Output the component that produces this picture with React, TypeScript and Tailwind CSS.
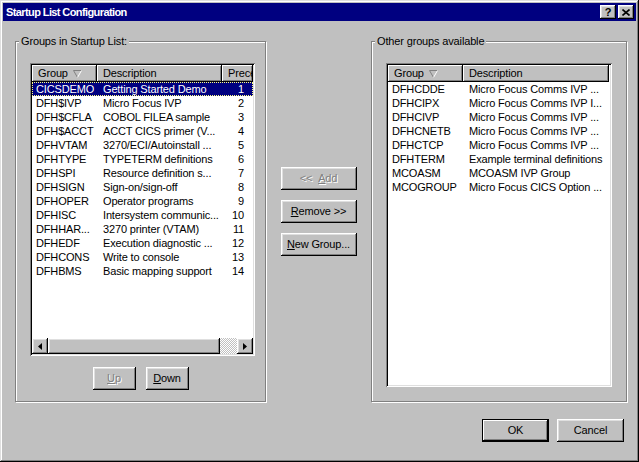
import React from "react";

const raised =
  "shadow-[inset_-1px_-1px_#000,inset_1px_1px_#fff,inset_-2px_-2px_#808080,inset_2px_2px_#dfdfdf]";
const raisedThin = "shadow-[inset_-1px_-1px_#000,inset_1px_1px_#fff,inset_-2px_-2px_#808080]";

const startup = [
  ["CICSDEMO", "Getting Started Demo", "1"],
  ["DFH$IVP", "Micro Focus IVP", "2"],
  ["DFH$CFLA", "COBOL FILEA sample", "3"],
  ["DFH$ACCT", "ACCT CICS primer (V...", "4"],
  ["DFHVTAM", "3270/ECI/Autoinstall ...", "5"],
  ["DFHTYPE", "TYPETERM definitions", "6"],
  ["DFHSPI", "Resource definition s...", "7"],
  ["DFHSIGN", "Sign-on/sign-off", "8"],
  ["DFHOPER", "Operator programs", "9"],
  ["DFHISC", "Intersystem communic...", "10"],
  ["DFHHAR...", "3270 printer (VTAM)", "11"],
  ["DFHEDF", "Execution diagnostic ...", "12"],
  ["DFHCONS", "Write to console", "13"],
  ["DFHBMS", "Basic mapping support", "14"],
];

const others = [
  ["DFHCDDE", "Micro Focus Comms IVP ..."],
  ["DFHCIPX", "Micro Focus Comms IVP I..."],
  ["DFHCIVP", "Micro Focus Comms IVP ..."],
  ["DFHCNETB", "Micro Focus Comms IVP ..."],
  ["DFHCTCP", "Micro Focus Comms IVP ..."],
  ["DFHTERM", "Example terminal definitions"],
  ["MCOASM", "MCOASM IVP Group"],
  ["MCOGROUP", "Micro Focus CICS Option ..."],
];

function SortArrow() {
  return (
    <svg width="9" height="8" viewBox="0 0 9 8" className="ml-[5px] mt-[1px]">
      <path d="M0.5 0.5 H8.5" stroke="#808080" />
      <path d="M0.5 0.5 L4.5 7.5" stroke="#808080" />
      <path d="M8.5 0.5 L4.5 7.5" stroke="#fff" />
    </svg>
  );
}

function HeaderCell({ w, label, sort, grow }: { w?: string; label: string; sort?: boolean; grow?: boolean }) {
  return (
    <div
      className={`${w ?? ""} ${grow ? "flex-1" : "shrink-0"} h-full flex items-center pl-[6px] overflow-hidden whitespace-nowrap bg-[#c0c0c0] ${raisedThin}`}
    >
      <span>{label}</span>
      {sort && <SortArrow />}
    </div>
  );
}

function Button({
  children,
  w,
  disabled,
  def,
}: {
  children: React.ReactNode;
  w: string;
  disabled?: boolean;
  def?: boolean;
}) {
  return (
    <div
      className={`${w} h-[23px] flex items-center justify-center bg-[#c0c0c0] ${
        def ? "border border-black shadow-[inset_-1px_-1px_#000,inset_1px_1px_#fff,inset_-2px_-2px_#808080]" : raised
      } ${disabled ? "text-[#808080] [text-shadow:1px_1px_#fff]" : "text-black"}`}
    >
      {children}
    </div>
  );
}

function GroupBox({ label, w, children }: { label: string; w: string; children: React.ReactNode }) {
  return (
    <div
      className={`${w} h-[361px] relative border border-[#808080] shadow-[inset_1px_1px_#fff,1px_1px_#fff] shrink-0`}
    >
      <div className="absolute -top-[7px] left-[3px] px-[2px] bg-[#c0c0c0] leading-[13px]">{label}</div>
      {children}
    </div>
  );
}

function ScrollArrow({ dir }: { dir: "left" | "right" }) {
  return (
    <div className={`w-[16px] h-[16px] shrink-0 flex items-center justify-center bg-[#c0c0c0] ${raised}`}>
      <svg width="4" height="7" viewBox="0 0 4 7">
        {dir === "left" ? <path d="M4 0 L0 3.5 L4 7 Z" fill="#000" /> : <path d="M0 0 L4 3.5 L0 7 Z" fill="#000" />}
      </svg>
    </div>
  );
}

function Sunken({ w, h, children }: { w: string; h: string; children: React.ReactNode }) {
  return (
    <div
      className={`${w} ${h} p-[2px] bg-white shadow-[inset_1px_1px_#808080,inset_-1px_-1px_#fff,inset_2px_2px_#000,inset_-2px_-2px_#dfdfdf] flex flex-col`}
    >
      {children}
    </div>
  );
}

export default function App() {
  return (
    <div className="w-[639px] h-[462px] bg-[#c0c0c0] p-[3px] flex flex-col font-['Liberation_Sans',Arial,sans-serif] text-[11px] tracking-[-0.15px] text-black shadow-[inset_-1px_-1px_#000,inset_1px_1px_#dfdfdf,inset_-2px_-2px_#808080,inset_2px_2px_#fff] select-none">
      {/* Title bar */}
      <div className="h-[18px] shrink-0 bg-[#000080] flex items-center justify-between pl-[3px] pr-[2px]">
        <span className="text-white font-bold tracking-[-0.6px] leading-none">Startup List Configuration</span>
        <div className="flex gap-[2px]">
          <div className={`w-[16px] h-[14px] flex items-center justify-center bg-[#c0c0c0] font-bold text-[11px] leading-none ${raised}`}>
            ?
          </div>
          <div className={`w-[16px] h-[14px] flex items-center justify-center bg-[#c0c0c0] ${raised}`}>
            <svg width="8" height="7" viewBox="0 0 8 7">
              <path d="M0.5 0.5 L7.5 6.5 M7.5 0.5 L0.5 6.5" stroke="#000" strokeWidth="1.6" />
            </svg>
          </div>
        </div>
      </div>

      {/* Body */}
      <div className="flex flex-col flex-1">
        <div className="flex mt-[20px] ml-[12px]">
          <GroupBox label="Groups in Startup List:" w="w-[251px]">
            <div className="ml-[14px] mt-[21px]">
              <Sunken w="w-[225px]" h="h-[293px]">
                <div className="h-[17px] flex shrink-0">
                  <HeaderCell w="w-[65px]" label="Group" sort />
                  <HeaderCell w="w-[125px]" label="Description" />
                  <HeaderCell grow label="Prece" />
                </div>
                <div className="flex-1 overflow-hidden">
                  {startup.map(([g, d, n], i) => (
                    <div
                      key={g}
                      className={`h-[14px] leading-[14px] flex whitespace-nowrap ${
                        i === 0 ? "bg-[#000080] text-white outline outline-1 outline-dotted outline-[#ffff80] -outline-offset-1" : ""
                      }`}
                    >
                      <div className="w-[65px] shrink-0 pl-[4px] overflow-hidden">{g}</div>
                      <div className="w-[125px] shrink-0 pl-[6px] overflow-hidden">{d}</div>
                      <div className="flex-1 text-right pr-[9px]">{n}</div>
                    </div>
                  ))}
                </div>
                <div className="h-[16px] flex shrink-0">
                  <ScrollArrow dir="left" />
                  <div className={`w-[172px] h-full bg-[#c0c0c0] ${raised}`} />
                  <div className="flex-1 h-full bg-[repeating-conic-gradient(#c0c0c0_0_25%,#fff_0_50%)] bg-[length:2px_2px]" />
                  <ScrollArrow dir="right" />
                </div>
              </Sunken>
            </div>
            <div className="flex justify-center gap-[10px] mt-[11px]">
              <Button w="w-[43px]" disabled>
                <u>U</u>p
              </Button>
              <Button w="w-[43px]">
                <u>D</u>own
              </Button>
            </div>
          </GroupBox>

          <div className="w-[105px] shrink-0 flex flex-col items-center gap-[10px] pt-[126px]">
            <Button w="w-[76px]" disabled>
              <span className="whitespace-pre">{"<<  "}</span>
              <u>A</u>dd
            </Button>
            <Button w="w-[76px]">
              <u>R</u>emove &gt;&gt;
            </Button>
            <Button w="w-[76px]">
              <u>N</u>ew Group...
            </Button>
          </div>

          <GroupBox label="Other groups available" w="w-[256px]">
            <div className="ml-[14px] mt-[21px]">
              <Sunken w="w-[226px]" h="h-[324px]">
                <div className="h-[17px] flex shrink-0">
                  <HeaderCell w="w-[75px]" label="Group" sort />
                  <HeaderCell w="w-[146px]" label="Description" />
                </div>
                <div className="flex-1 overflow-hidden">
                  {others.map(([g, d]) => (
                    <div key={g} className="h-[14px] leading-[14px] flex whitespace-nowrap">
                      <div className="w-[75px] shrink-0 pl-[4px] overflow-hidden">{g}</div>
                      <div className="w-[146px] shrink-0 pl-[6px] overflow-hidden">{d}</div>
                    </div>
                  ))}
                </div>
              </Sunken>
            </div>
          </GroupBox>
        </div>

        <div className="flex justify-end gap-[8px] mt-[17px] pr-[12px]">
          <Button w="w-[67px]" def>
            OK
          </Button>
          <Button w="w-[67px]">Cancel</Button>
        </div>
      </div>
    </div>
  );
}
